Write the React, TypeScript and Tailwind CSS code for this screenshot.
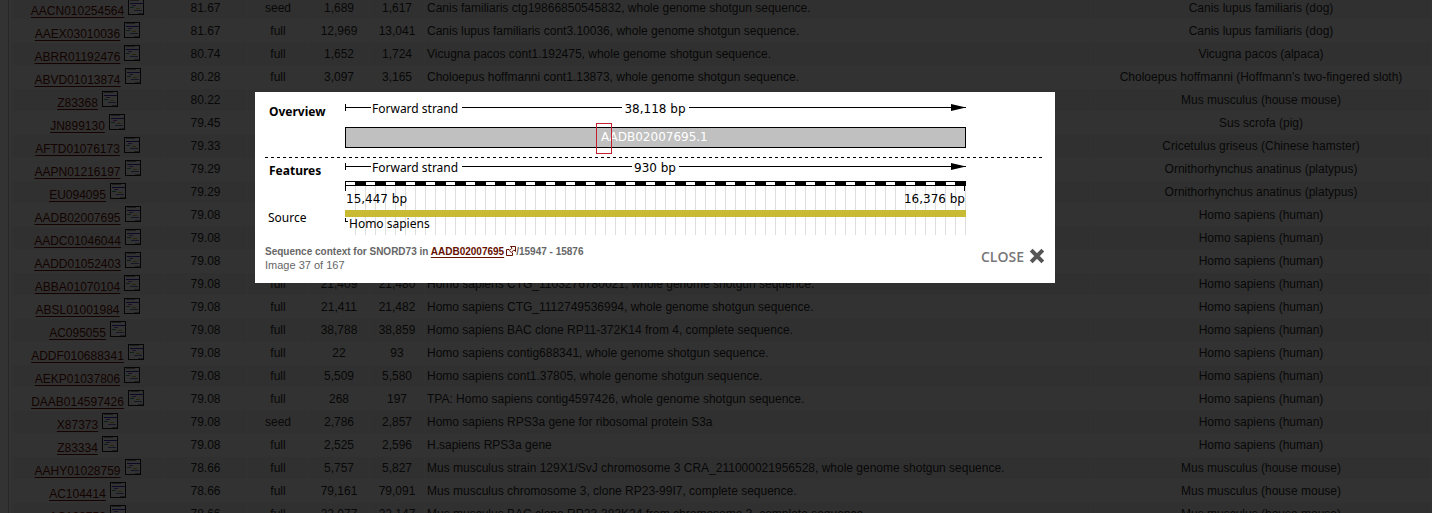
import React from "react";

type Row = {
  acc: string;
  score: string;
  type?: string;
  start?: string;
  end?: string;
  desc?: string;
  species: string;
};

const HUMAN = "Homo sapiens (human)";
const MOUSE = "Mus musculus (house mouse)";
const DOG = "Canis lupus familiaris (dog)";
const PLATYPUS = "Ornithorhynchus anatinus (platypus)";

const rows: Row[] = [
  { acc: "AACN010254564", score: "81.67", type: "seed", start: "1,689", end: "1,617", desc: "Canis familiaris ctg19866850545832, whole genome shotgun sequence.", species: DOG },
  { acc: "AAEX03010036", score: "81.67", type: "full", start: "12,969", end: "13,041", desc: "Canis lupus familiaris cont3.10036, whole genome shotgun sequence.", species: DOG },
  { acc: "ABRR01192476", score: "80.74", type: "full", start: "1,652", end: "1,724", desc: "Vicugna pacos cont1.192475, whole genome shotgun sequence.", species: "Vicugna pacos (alpaca)" },
  { acc: "ABVD01013874", score: "80.28", type: "full", start: "3,097", end: "3,165", desc: "Choloepus hoffmanni cont1.13873, whole genome shotgun sequence.", species: "Choloepus hoffmanni (Hoffmann's two-fingered sloth)" },
  { acc: "Z83368", score: "80.22", species: MOUSE },
  { acc: "JN899130", score: "79.45", species: "Sus scrofa (pig)" },
  { acc: "AFTD01076173", score: "79.33", species: "Cricetulus griseus (Chinese hamster)" },
  { acc: "AAPN01216197", score: "79.29", species: PLATYPUS },
  { acc: "EU094095", score: "79.29", species: PLATYPUS },
  { acc: "AADB02007695", score: "79.08", species: HUMAN },
  { acc: "AADC01046044", score: "79.08", species: HUMAN },
  { acc: "AADD01052403", score: "79.08", species: HUMAN },
  { acc: "ABBA01070104", score: "79.08", type: "full", start: "21,409", end: "21,480", desc: "Homo sapiens CTG_1103276780021, whole genome shotgun sequence.", species: HUMAN },
  { acc: "ABSL01001984", score: "79.08", type: "full", start: "21,411", end: "21,482", desc: "Homo sapiens CTG_1112749536994, whole genome shotgun sequence.", species: HUMAN },
  { acc: "AC095055", score: "79.08", type: "full", start: "38,788", end: "38,859", desc: "Homo sapiens BAC clone RP11-372K14 from 4, complete sequence.", species: HUMAN },
  { acc: "ADDF010688341", score: "79.08", type: "full", start: "22", end: "93", desc: "Homo sapiens contig688341, whole genome shotgun sequence.", species: HUMAN },
  { acc: "AEKP01037806", score: "79.08", type: "full", start: "5,509", end: "5,580", desc: "Homo sapiens cont1.37805, whole genome shotgun sequence.", species: HUMAN },
  { acc: "DAAB014597426", score: "79.08", type: "full", start: "268", end: "197", desc: "TPA: Homo sapiens contig4597426, whole genome shotgun sequence.", species: HUMAN },
  { acc: "X87373", score: "79.08", type: "seed", start: "2,786", end: "2,857", desc: "Homo sapiens RPS3a gene for ribosomal protein S3a", species: HUMAN },
  { acc: "Z83334", score: "79.08", type: "full", start: "2,525", end: "2,596", desc: "H.sapiens RPS3a gene", species: HUMAN },
  { acc: "AAHY01028759", score: "78.66", type: "full", start: "5,757", end: "5,827", desc: "Mus musculus strain 129X1/SvJ chromosome 3 CRA_211000021956528, whole genome shotgun sequence.", species: MOUSE },
  { acc: "AC104414", score: "78.66", type: "full", start: "79,161", end: "79,091", desc: "Mus musculus chromosome 3, clone RP23-99I7, complete sequence.", species: MOUSE },
  { acc: "AC123752", score: "78.66", type: "full", start: "22,077", end: "22,147", desc: "Mus musculus BAC clone RP23-383K24 from chromosome 3, complete sequence.", species: MOUSE },
];

function ContextIcon() {
  return (
    <svg className="ml-1 inline-block size-4 shrink-0 align-baseline" viewBox="0 0 16 16" shapeRendering="crispEdges" aria-hidden="true">
      <rect x="0.5" y="0.5" width="15" height="15" fill="#ffffff" stroke="#1c1c1c" />
      <path d="M2 1.5h9M10 14.5h5" stroke="#8a8a8a" />
      <path d="M2 4.5h13" stroke="#3434c4" />
      <path d="M4 6.5h4" stroke="#a050b0" />
      <path d="M2 8.5h4" stroke="#40a070" />
      <path d="M8 9.5h4" stroke="#c8b830" />
      <path d="M6 11.5h8" stroke="#5a7ac0" />
    </svg>
  );
}

function HitsTable() {
  return (
    <div className="ml-2 -mt-1 border-l border-[#c4c4c4] pl-[2px]">
      <table className="w-full table-fixed border-collapse text-center text-[12px] leading-4 text-[#2a2a2a]">
        <colgroup>
          <col className="w-[152px]" />
          <col className="w-[84px]" />
          <col className="w-[61px]" />
          <col className="w-[61px]" />
          <col className="w-[55px]" />
          <col />
          <col className="w-[341px]" />
        </colgroup>
        <tbody>
          {rows.map((r) => (
            <tr key={r.acc} className="h-[23px] odd:bg-[#f0f0f0] even:bg-[#f7f7f7] *:border *:border-[#fafafa] *:p-0 *:whitespace-nowrap">
              <td>
                <div className="flex h-[22px] items-baseline justify-center leading-7">
                  <a href={"#" + r.acc} className="text-[#661100] underline underline-offset-2">
                    {r.acc}
                  </a>
                  <ContextIcon />
                </div>
              </td>
              <td>{r.score}</td>
              <td>{r.type}</td>
              <td>{r.start}</td>
              <td>{r.end}</td>
              <td className="text-left">
                <span className="pl-[2px]">{r.desc}</span>
              </td>
              <td>{r.species}</td>
            </tr>
          ))}
        </tbody>
      </table>
    </div>
  );
}

const gridLines = Array.from({ length: 62 }, (_, i) => 90.5 + i * 10);
const scaleGaps = Array.from({ length: 31 }, (_, i) => 81 + i * 20);
const words = "font-['Noto_Sans',sans-serif] text-[12px]";
const numbers = "font-['DejaVu_Sans',sans-serif] text-[12px]";

function ContextDiagram() {
  return (
    <svg className="block w-full" viewBox="0 0 780 140" role="img" aria-label="Sequence context">
      <g shapeRendering="crispEdges" stroke="#000" fill="none">
        <g stroke="#dedede">
          {gridLines.map((x) => (
            <path key={x} d={`M${x} 84V133`} />
          ))}
        </g>
        <path d="M80.5 2v7M80 5.5h26M197 5.5h160M424 5.5h277" />
        <rect x="80.5" y="25.5" width="620" height="20" fill="#c0c0c0" />
        <path d="M0 55.5h777" strokeDasharray="3 3" />
        <path d="M80.5 61v7M80 64.5h26M197 64.5h170M414 64.5h287" />
        <rect x="80" y="79" width="621" height="5" fill="#000" stroke="none" />
        {scaleGaps.map((x) => (
          <rect key={x} x={x} y="80" width="9" height="3" fill="#fff" stroke="none" />
        ))}
        <path d="M80.5 84v5M699.5 84v5" />
        <rect x="80" y="108" width="621" height="7" fill="#c8bb33" stroke="none" />
        <path d="M80.5 116v4M80 119.5h3" />
      </g>
      <path d="M686 2l15 3.5l-15 3.5zM686 61l15 3.5l-15 3.5z" fill="#000" />
      <g className={words} fill="#000">
        <text x="107" y="11">Forward strand</text>
        <text x="107" y="70">Forward strand</text>
        <text x="3" y="120">Source</text>
        <text x="84" y="126">Homo sapiens</text>
        <text x="4" y="14" className="font-bold">Overview</text>
        <text x="4" y="73" className="font-bold">Features</text>
      </g>
      <g className={numbers} fill="#000">
        <text x="390" y="11" textAnchor="middle">38,118 bp</text>
        <text x="390" y="70" textAnchor="middle">930 bp</text>
        <text x="81" y="101">15,447 bp</text>
        <text x="700" y="101" textAnchor="end">16,376 bp</text>
        <text x="336" y="39" fill="#fff">AADB02007695.1</text>
      </g>
      <rect x="331.5" y="21.5" width="15" height="30" fill="none" stroke="#c42030" shapeRendering="crispEdges" />
    </svg>
  );
}

function ExternalIcon() {
  return (
    <svg className="ml-[2px] inline-block size-[10px] align-[-1px]" viewBox="0 0 10 10" fill="none" stroke="#661100" aria-hidden="true">
      <path d="M3.5 3.5h-3v6h6v-3" />
      <path d="M4.5 0.5h5v5l-1.6-1.6l-2.6 2.6l-1.8-1.8l2.6-2.6z" />
    </svg>
  );
}

function Lightbox() {
  return (
    <div role="dialog" aria-label="Sequence context" className="w-full max-w-[800px] bg-white px-[10px] pt-[10px] pb-[13px]">
      <ContextDiagram />
      <div className="flex justify-between pt-[2px] text-[#666]">
        <div>
          <p className="text-[10px] leading-4 font-bold">
            Sequence context for SNORD73 in{" "}
            <a href="#AADB02007695" className="text-[#661100]">
              <span className="underline underline-offset-2">AADB02007695</span>
              <ExternalIcon />
            </a>
            /15947 - 15876
          </p>
          <p className="text-[11px] leading-[10px]">Image 37 of 167</p>
        </div>
        <button type="button" className="flex h-6 items-center gap-[5px] font-['Open_Sans',sans-serif] text-[14px] font-semibold text-[#777]">
          CLOSE
          <svg className="size-4" viewBox="0 0 16 16" aria-hidden="true">
            <path d="M2.2 2.2L13.8 13.8M13.8 2.2L2.2 13.8" stroke="#555" strokeWidth="4" />
          </svg>
        </button>
      </div>
    </div>
  );
}

export default function App() {
  return (
    <div className="relative h-screen overflow-hidden bg-white font-['Liberation_Sans',Arial,sans-serif]">
      <HitsTable />
      <div className="absolute inset-0 flex items-start justify-center bg-black/80 pt-[92px] pr-[122px]">
        <Lightbox />
      </div>
    </div>
  );
}
